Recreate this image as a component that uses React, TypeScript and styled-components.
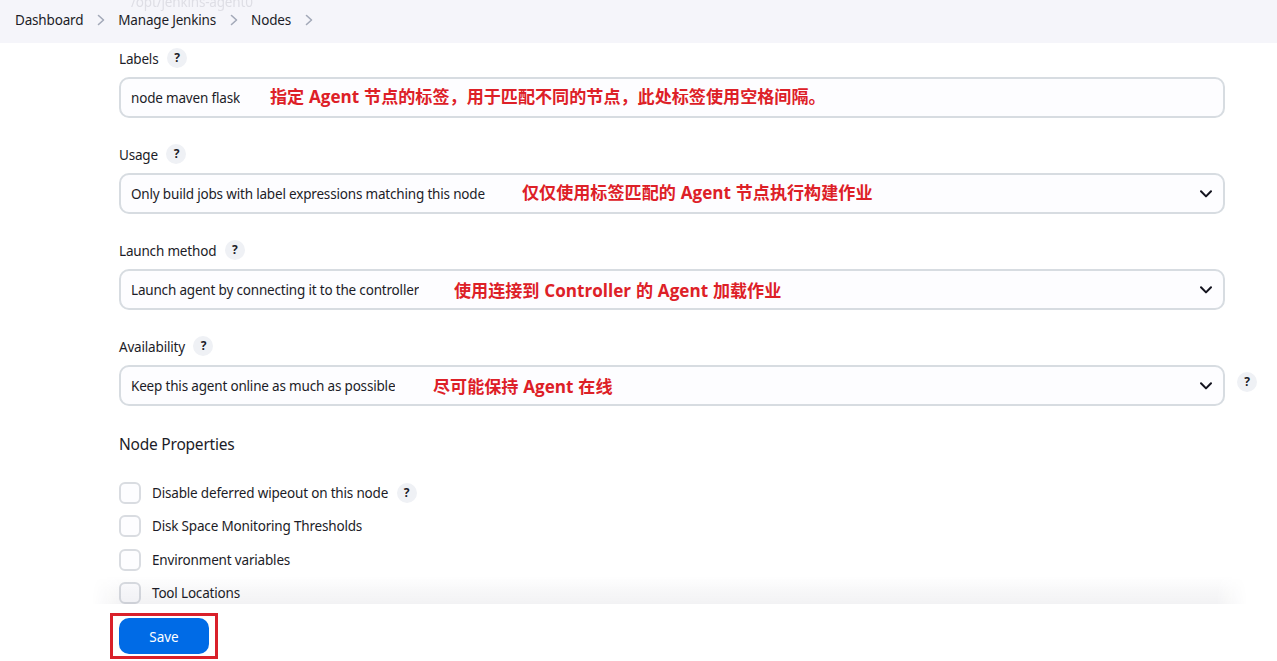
import React from "react";
import styled, { createGlobalStyle } from "styled-components";

const GlobalStyle = createGlobalStyle`
  *, *::before, *::after { box-sizing: border-box; }
  body {
    margin: 0;
    background: #fff;
    color: #1c1c27;
    font-family: "Noto Sans", "Noto Sans CJK SC", sans-serif;
    font-size: 13.5px;
    letter-spacing: -0.18px;
    overflow: hidden;
  }
`;

const Page = styled.div`
  display: flex;
  flex-direction: column;
  width: 1277px;
  height: 661px;
  overflow: hidden;
`;

const Breadcrumbs = styled.nav`
  position: relative;
  flex: none;
  display: flex;
  align-items: center;
  height: 43px;
  padding: 0 0 3px 15px;
  background: #f5f5fa;
  overflow: hidden;
`;

const Crumb = styled.span`
  position: relative;
  line-height: 20px;
  white-space: nowrap;
`;

const CrumbArrow = styled.svg`
  position: relative;
  flex: none;
  width: 8px;
  height: 12px;
  margin: 0 13.5px;
  fill: none;
  stroke: #a3a9b8;
  stroke-width: 1.6;
  stroke-linecap: round;
  stroke-linejoin: round;
`;

const ScrolledValue = styled.span`
  position: absolute;
  left: 131px;
  top: -8px;
  line-height: 20px;
  color: #dedee5;
  filter: blur(0.4px);
`;

const Form = styled.main`
  flex: 1;
  min-height: 0;
  display: flex;
  flex-direction: column;
  padding: 5px 52px 0 119px;
  overflow: hidden;
`;

const Field = styled.section`
  position: relative;
  flex: none;
  height: 96px;
`;

const FieldLabel = styled.div`
  display: flex;
  align-items: center;
  gap: 8.5px;
  height: 22px;
  margin-bottom: 7px;
  line-height: 22px;
`;

const Help = styled.span<{ $lift?: number }>`
  flex: none;
  display: flex;
  align-items: center;
  justify-content: center;
  width: 20px;
  height: 20px;
  margin-top: -${(p) => p.$lift ?? 2}px;
  border-radius: 50%;
  background: #eff1f5;
  font-size: 12px;
  font-weight: 700;
  line-height: 20px;
`;

const SideHelp = styled.div`
  position: absolute;
  left: 1118px;
  top: 36px;
`;

const Control = styled.div`
  display: flex;
  align-items: center;
  justify-content: space-between;
  height: 41px;
  padding: 0 11px 0 10px;
  border: 2px solid #d7dce1;
  border-radius: 10px;
  background: #fdfdff;
`;

const Value = styled.span<{ $clipped?: boolean }>`
  height: ${(p) => (p.$clipped ? 18 : 22)}px;
  line-height: ${(p) => (p.$clipped ? 18 : 22)}px;
  overflow: hidden;
  white-space: nowrap;
`;

const Caret = styled.svg`
  flex: none;
  width: 12px;
  height: 8px;
  fill: none;
  stroke: #14141f;
  stroke-width: 2;
  stroke-linecap: round;
  stroke-linejoin: round;
`;

const Note = styled.strong<{ $left: number; $top: number }>`
  position: absolute;
  left: ${(p) => p.$left}px;
  top: ${(p) => p.$top}px;
  color: #dd2027;
  font-family: "Open Sans", "Noto Sans CJK SC", sans-serif;
  font-size: 17.1px;
  font-weight: 700;
  letter-spacing: 0;
  word-spacing: 0.4px;
  line-height: 24px;
  white-space: nowrap;
`;

const SectionTitle = styled.h2`
  flex: none;
  margin: 0 0 20px;
  font-size: 15.5px;
  font-weight: 400;
  letter-spacing: -0.22px;
  line-height: 24px;
`;

const Options = styled.div`
  display: flex;
  flex-direction: column;
`;

const Option = styled.label`
  flex: none;
  display: flex;
  align-items: center;
  height: 33.5px;
  line-height: 22px;
`;

const Box = styled.span`
  flex: none;
  width: 22px;
  height: 22px;
  margin-right: 11px;
  border: 2px solid #d9dce1;
  border-radius: 6px;
  background: #fdfdff;
`;

const OptionHelp = styled.span`
  margin-left: 8.5px;
`;

const BottomBar = styled.footer`
  position: relative;
  flex: none;
  height: 57px;
  padding: 9px 0 0 110px;
  background: #fff;

  &::before {
    content: "";
    position: absolute;
    left: 92px;
    right: 30px;
    top: -28px;
    height: 28px;
    background: linear-gradient(to top, rgba(20, 20, 50, 0.055), rgba(20, 20, 50, 0.03) 50%, rgba(20, 20, 50, 0));
    mask-image: linear-gradient(to right, transparent, #000 30px, #000 calc(100% - 30px), transparent);
  }
`;

const SaveFrame = styled.div`
  display: flex;
  width: 108px;
  height: 46px;
  padding: 2px 6px;
  border: 3px solid #d9202a;
`;

const SaveButton = styled.button`
  width: 90px;
  height: 36px;
  padding: 1px 0 0;
  border: 0;
  border-radius: 10px;
  background: #006be6;
  color: #fff;
  font: inherit;
  letter-spacing: 0;
`;

const crumbs = ["Dashboard", "Manage Jenkins", "Nodes"];

interface FieldSpec {
  label: string;
  value: string;
  select?: boolean;
  sideHelp?: boolean;
  note: string;
  left: number;
  top: number;
}

const fields: FieldSpec[] = [
  { label: "Labels", value: "node maven flask", note: "指定 Agent 节点的标签，用于匹配不同的节点，此处标签使用空格间隔。", left: 151, top: 37 },
  { label: "Usage", value: "Only build jobs with label expressions matching this node", select: true, note: "仅仅使用标签匹配的 Agent 节点执行构建作业", left: 403, top: 37 },
  { label: "Launch method", value: "Launch agent by connecting it to the controller", select: true, note: "使用连接到 Controller 的 Agent 加载作业", left: 335, top: 39 },
  { label: "Availability", value: "Keep this agent online as much as possible", select: true, sideHelp: true, note: "尽可能保持 Agent 在线", left: 314, top: 39 },
];

const options = [
  { label: "Disable deferred wipeout on this node", help: true },
  { label: "Disk Space Monitoring Thresholds" },
  { label: "Environment variables" },
  { label: "Tool Locations" },
];

export default function App() {
  return (
    <>
      <GlobalStyle />
      <Page>
        <Breadcrumbs>
          <ScrolledValue>/opt/jenkins-agent0</ScrolledValue>
          {crumbs.map((c) => (
            <React.Fragment key={c}>
              <Crumb>{c}</Crumb>
              <CrumbArrow viewBox="0 0 8 12">
                <path d="M1.5 1.5 6.5 6 1.5 10.5" />
              </CrumbArrow>
            </React.Fragment>
          ))}
        </Breadcrumbs>
        <Form>
          {fields.map((f) => (
            <Field key={f.label}>
              <FieldLabel>
                {f.label}
                <Help>?</Help>
              </FieldLabel>
              <Control>
                <Value $clipped={f.select}>{f.value}</Value>
                {f.select && (
                  <Caret viewBox="0 0 12 8">
                    <path d="M1 1.2 6 6.4 11 1.2" />
                  </Caret>
                )}
              </Control>
              <Note $left={f.left} $top={f.top}>{f.note}</Note>
              {f.sideHelp && (
                <SideHelp>
                  <Help $lift={0}>?</Help>
                </SideHelp>
              )}
            </Field>
          ))}
          <SectionTitle>Node Properties</SectionTitle>
          <Options>
            {options.map((o) => (
              <Option key={o.label}>
                <Box />
                {o.label}
                {o.help && (
                  <OptionHelp>
                    <Help $lift={0}>?</Help>
                  </OptionHelp>
                )}
              </Option>
            ))}
          </Options>
        </Form>
        <BottomBar>
          <SaveFrame>
            <SaveButton>Save</SaveButton>
          </SaveFrame>
        </BottomBar>
      </Page>
    </>
  );
}
